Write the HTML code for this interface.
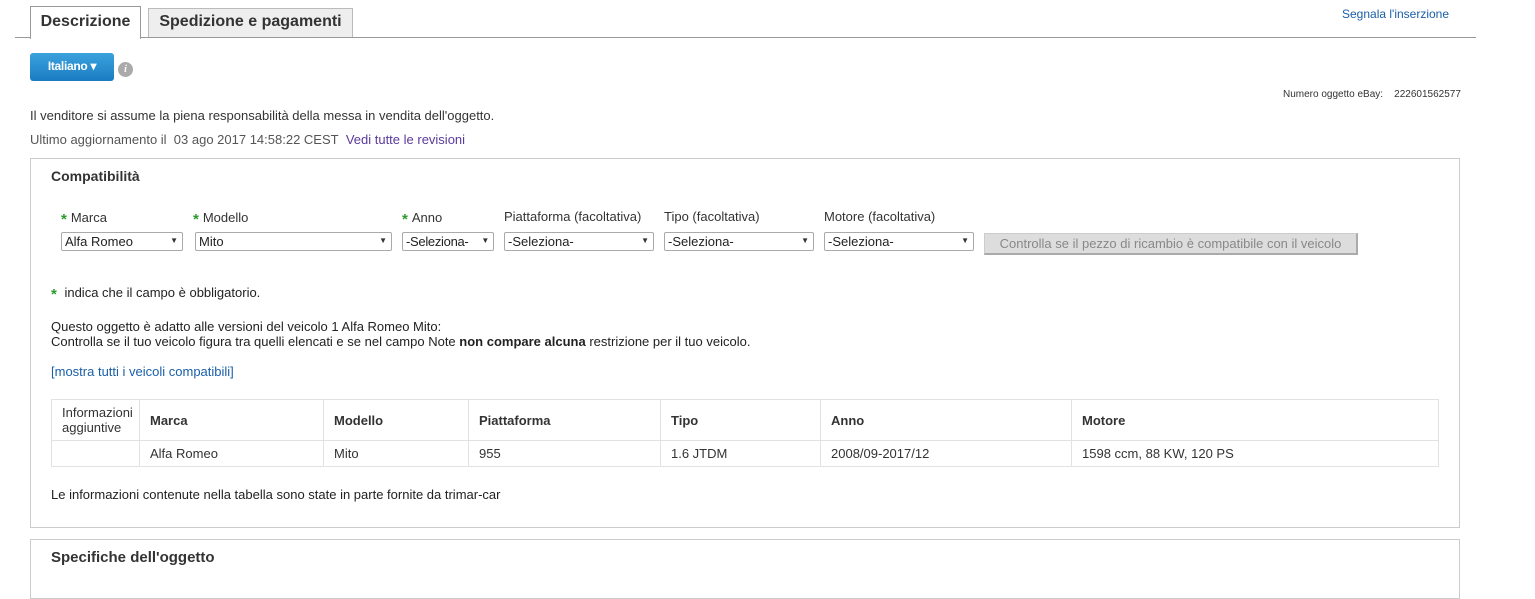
<!DOCTYPE html>
<html><head><meta charset="utf-8"><style>
*{box-sizing:border-box;margin:0;padding:0}
body{width:1535px;height:573px;overflow:hidden;background:#fff;font-family:"Liberation Sans",Arial,sans-serif;font-size:13px;color:#333;position:relative}
.a{position:absolute;white-space:nowrap}
.tab{position:absolute;border:1px solid #bbb;border-bottom:none;font-weight:bold;font-size:16px;color:#333;text-align:center}
.sel{position:absolute;top:232px;height:19px;border:1px solid #aaa;border-radius:2px;font-size:13px;color:#222;padding:1px 3px;background:#fff}
.sel:after{content:"▼";position:absolute;right:4px;top:3px;font-size:8px;color:#333}
.lab{position:absolute;top:209px;font-size:13px;color:#333}
.st{color:#2a9a2a;font-weight:bold;font-size:15px;margin-right:4px;position:relative;top:2px}
table{position:absolute;left:51px;top:399px;width:1388px;border-collapse:collapse;font-size:13px}
td,th{border:1px solid #e2e2e2;padding:0 10px;text-align:left;color:#333}
th{font-weight:bold;height:41px}
td{height:26px}
</style></head><body>
<div class="a" style="left:15px;top:37px;width:1461px;border-top:1px solid #999"></div>
<div class="tab" style="left:30px;top:6px;width:111px;height:33px;background:#fff;line-height:30px;border-color:#999">Descrizione</div>
<div class="tab" style="left:148px;top:8px;width:205px;height:29px;background:#eee;line-height:26px">Spedizione e pagamenti</div>
<div class="a" style="left:1342px;top:7px;color:#1a5fa8;font-size:12px">Segnala l'inserzione</div>
<div class="a" style="left:30px;top:53px;width:84px;height:28px;border-radius:3px;background:linear-gradient(#3aa2dd,#1b7cc2);color:#fff;font-weight:bold;font-size:12px;text-align:center;line-height:27px;letter-spacing:-0.3px">Italiano ▾</div>
<div class="a" style="left:118px;top:62px;width:15px;height:15px;border-radius:50%;background:#aaa;color:#fff;font-size:10px;font-style:italic;font-weight:bold;text-align:center;line-height:15px;font-family:'Liberation Serif',serif">i</div>
<div class="a" style="left:1283px;top:89px;font-size:10px;color:#333">Numero oggetto eBay:&nbsp;&nbsp;&nbsp;&nbsp;222601562577</div>
<div class="a" style="left:30px;top:108px">Il venditore si assume la piena responsabilità della messa in vendita dell'oggetto.</div>
<div class="a" style="left:30px;top:132px;color:#555">Ultimo aggiornamento il&nbsp; 03 ago 2017 14:58:22 CEST&nbsp; <span style="color:#5b3a9b">Vedi tutte le revisioni</span></div>
<div class="a" style="left:30px;top:158px;width:1430px;height:370px;border:1px solid #ccc"></div>
<div class="a" style="left:51px;top:168px;font-size:14px;font-weight:bold;color:#333">Compatibilità</div>
<div class="lab" style="left:61px"><span class="st">*</span>Marca</div>
<div class="lab" style="left:193px"><span class="st">*</span>Modello</div>
<div class="lab" style="left:402px"><span class="st">*</span>Anno</div>
<div class="lab" style="left:504px">Piattaforma (facoltativa)</div>
<div class="lab" style="left:664px">Tipo (facoltativa)</div>
<div class="lab" style="left:824px">Motore (facoltativa)</div>
<div class="sel" style="left:61px;width:122px">Alfa Romeo</div>
<div class="sel" style="left:195px;width:197px">Mito</div>
<div class="sel" style="left:402px;width:92px;letter-spacing:-0.3px">-Seleziona-</div>
<div class="sel" style="left:504px;width:150px">-Seleziona-</div>
<div class="sel" style="left:664px;width:150px">-Seleziona-</div>
<div class="sel" style="left:824px;width:150px">-Seleziona-</div>
<div class="a" style="left:984px;top:233px;width:374px;height:22px;background:#ddd;border:1px solid #ccc;border-right:2px solid #aaa;border-bottom:2px solid #aaa;color:#888;font-size:13px;text-align:center;line-height:19px">Controlla se il pezzo di ricambio è compatibile con il veicolo</div>
<div class="a" style="left:51px;top:284px;color:#222"><span class="st">*</span> indica che il campo è obbligatorio.</div>
<div class="a" style="left:51px;top:319px;color:#222;line-height:15px">Questo oggetto è adatto alle versioni del veicolo 1 Alfa Romeo Mito:<br>Controlla se il tuo veicolo figura tra quelli elencati e se nel campo Note <b>non compare alcuna</b> restrizione per il tuo veicolo.</div>
<div class="a" style="left:51px;top:364px;color:#1a5fa8">[mostra tutti i veicoli compatibili]</div>
<table>
<tr><th style="width:88px;font-weight:normal;padding:0 3px 0 10px;line-height:15px">Informazioni aggiuntive</th><th style="width:184px">Marca</th><th style="width:145px">Modello</th><th style="width:192px">Piattaforma</th><th style="width:160px">Tipo</th><th style="width:251px">Anno</th><th>Motore</th></tr>
<tr><td></td><td>Alfa Romeo</td><td>Mito</td><td>955</td><td>1.6 JTDM</td><td>2008/09-2017/12</td><td>1598 ccm, 88 KW, 120 PS</td></tr>
</table>
<div class="a" style="left:51px;top:487px;color:#222">Le informazioni contenute nella tabella sono state in parte fornite da trimar-car</div>
<div class="a" style="left:30px;top:539px;width:1430px;height:60px;border:1px solid #ccc"></div>
<div class="a" style="left:51px;top:549px;font-size:15px;font-weight:bold;color:#333">Specifiche dell'oggetto</div>
</body></html>
